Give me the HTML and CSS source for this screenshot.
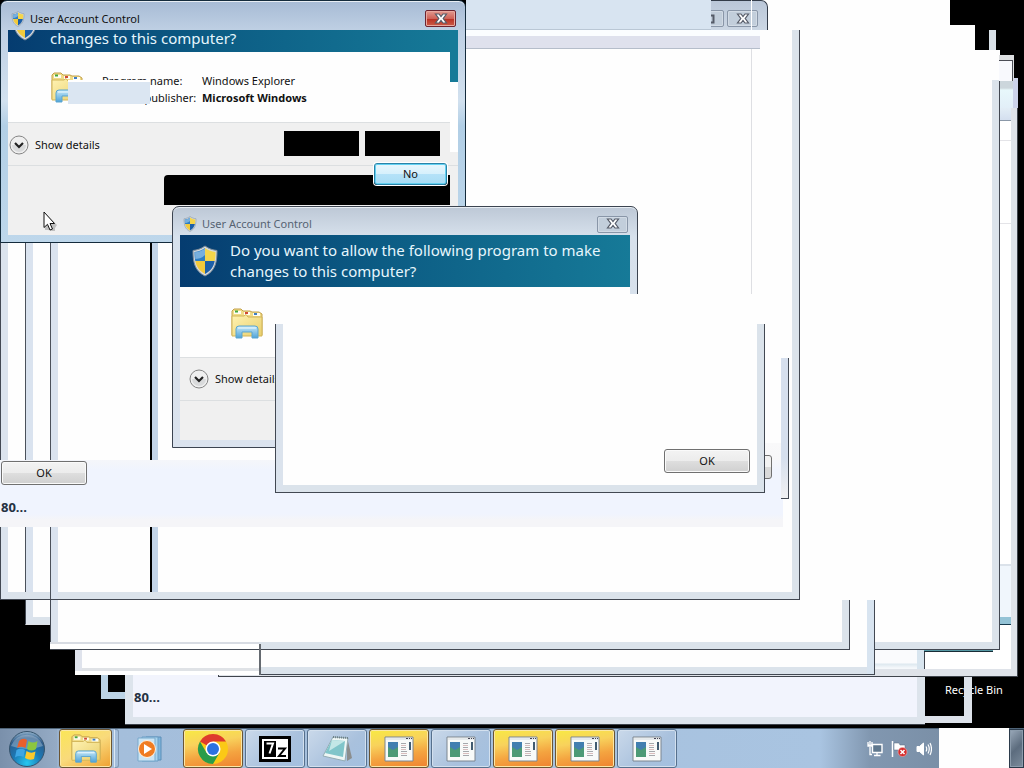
FILE: index.html
```html
<!DOCTYPE html>
<html lang="en">
<head>
<meta charset="utf-8">
<title>Desktop</title>
<link rel="stylesheet" href="styles.css">
</head>
<body>
<svg width="0" height="0" class="defs" aria-hidden="true">
  <defs>
    <linearGradient id="fold" x1="0" y1="0" x2="1" y2="1"><stop offset="0" stop-color="#fff3b4"/><stop offset="1" stop-color="#e9cf6c"/></linearGradient>
    <linearGradient id="glass" x1="0" y1="0" x2="0" y2="1"><stop offset="0" stop-color="#c5e8f8"/><stop offset="1" stop-color="#4fa3d8"/></linearGradient>
    <radialGradient id="orb" cx=".5" cy=".9" r=".9"><stop offset="0" stop-color="#25c8f0"/><stop offset=".45" stop-color="#1c78b4"/><stop offset=".8" stop-color="#2c5c8c"/><stop offset="1" stop-color="#9ab8d0"/></radialGradient>
    <symbol id="shield" viewBox="0 0 26 32">
      <path d="M13 1C9 4 5 5 1 5.500C1 18 3 26 13 31C23 26 25 18 25 5.500C21 5 17 4 13 1Z" fill="#d5dade" stroke="#7e8d9b" stroke-width="1"/>
      <path d="M13 3C10 5.500 6 6.500 2.500 7C2.500 11 2.700 13 3.300 16H13Z" fill="#2d7ec4"/>
      <path d="M13 3C16 5.500 20 6.500 23.500 7C23.500 11 23.300 13 22.700 16H13Z" fill="#f5d54a"/>
      <path d="M3.300 16H13V29C7.500 26 4.500 22 3.300 16Z" fill="#f2ca3c"/>
      <path d="M22.700 16H13V29C18.500 26 21.500 22 22.700 16Z" fill="#1c5fa8"/>
      <path d="M3 7.300C6 7 10 6 13 3.500V10C10 13 6 14 3.300 14Z" fill="#a8d0ee" opacity=".6"/>
    </symbol>
    <symbol id="explorer" viewBox="0 0 34 32">
      <path d="M2 27V3L4 1H11L13 3H20L22 4H29L32 6V27Z" fill="#f1dc88" stroke="#c3a14a"/>
      <path d="M4 3H11V6H4ZM14 4H20V7H14ZM23 5H30V8H23Z" fill="#fffdf2"/>
      <path d="M5 2.500H8V4.500H5Z" fill="#42a63f"/><path d="M15 4H18V6H15Z" fill="#d04a34"/><path d="M24 5H27V7H24Z" fill="#3d7dc4"/>
      <path d="M2 8H14L16 6.500L18 9H32V28H2Z" fill="url(#fold)" stroke="#d2b559"/>
      <path d="M6 30V21Q6 18 9 18H25Q28 18 28 21V30H22V24H12V30Z" fill="url(#glass)" stroke="#5ba5cf"/>
      <path d="M8 20H26" stroke="#eefaff"/>
    </symbol>
    <symbol id="cross" viewBox="0 0 14 12">
      <path d="M1.500 1H5L7 3.500L9 1H12.500L9.200 5.500L12.500 10H9L7 7.500L5 10H1.500L4.800 5.500Z" fill="#fff" stroke="#555b68" stroke-width="1.200"/>
    </symbol>
    <symbol id="chevron" viewBox="0 0 20 20">
      <circle cx="10" cy="10" r="9" fill="#efefef" stroke="#858585"/>
      <path d="M3 10A7 7 0 0 0 17 10Z" fill="#d9dadb"/>
      <path d="M6 8L10 12L14 8" fill="none" stroke="#222" stroke-width="2.200"/>
    </symbol>
    <symbol id="app" viewBox="0 0 30 26">
      <path d="M1 1H29V25H1Z" fill="#f8faf9" stroke="#7c8690"/>
      <path d="M2 2H28V4H2Z" fill="#e6eaec"/><path d="M22 2.500H24M25 2.500H26M27 2.500H28" stroke="#445"/>
      <path d="M4 6H14V21H4Z" fill="#4c9a76"/><path d="M4 6H14V11L9 14L4 11Z" fill="#427fb0"/>
      <path d="M17 7.500H22M17 11.500H22M17 15.500H23M17 19.500H23" stroke="#a5a8ac"/><path d="M17 9.500H22M17 13.500H22M17 17.500H23" stroke="#d9bdbd"/>
      <path d="M25 6H27V14H25Z" fill="#415b70"/>
    </symbol>
  </defs>
</svg>

<main class="desktop">
  <span class="desktop-label">Recycle Bin</span>

  <div class="pane sliver-top"></div>
  <div class="pane trail-white step-1"></div>
  <div class="pane trail-white step-2"></div>
  <div class="pane trail-white step-3"></div>

  <div class="pane corner-right"></div>
  <div class="pane corner-left"></div>
  <section class="pane lower-window"><strong>80...</strong></section>
  <div class="pane far-window">
    <div class="far-side">
      <i class="far-head"></i><i class="far-tool"></i><i class="far-row"></i><i class="far-row tall"></i><i class="far-gap"></i><i class="far-foot"></i>
    </div>
  </div>
  <div class="pane far-box"></div>
  <div class="pane far-cap"></div>
  <div class="pane mid-strip"></div>
  <div class="pane teal-line"></div>
  <div class="pane frame big-right"></div>
  <div class="pane frame w-25"></div>
  <div class="pane left-tail"></div>
  <div class="pane frame w-260"></div>
  <div class="pane frame w-50"></div>
  <div class="pane w-50-foot"></div>
  <div class="pane tick"></div>
  <div class="pane frame w-0"></div>
  <div class="pane edge e-25"></div>
  <div class="pane edge e-50"></div>
  <div class="pane edge e-151"></div>

  <div class="pane back-title">
    <button class="cap" aria-label="Maximize"><svg width="12" height="10" viewBox="0 0 12 10"><path d="M1.500 1.500H10.500V8.500H1.500Z" fill="none" stroke="#555b68" stroke-width="2"/></svg></button>
    <button class="cap" aria-label="Close"><svg width="14" height="12"><use href="#cross"/></svg></button>
  </div>
  <div class="pane back-head"></div>
  <div class="pane back-bar"></div>
  <div class="pane hairline"></div>

  <div class="pane smear-right"></div>
  <section class="pane smear">
    <button class="btn">OK</button>
    <strong>80...</strong>
  </section>
  <div class="pane hook"></div>
  <div class="pane btn-end"></div>

  <section class="pane uac uac-back">
    <header class="title"><svg width="14" height="16"><use href="#shield"/></svg><span>User Account Control</span>
      <button class="cap" aria-label="Close"><svg width="14" height="12"><use href="#cross"/></svg></button></header>
    <div class="client">
      <div class="banner"><svg width="26" height="32"><use href="#shield"/></svg><h2>Do you want to allow the following program to make<br>changes to this computer?</h2></div>
      <div class="info"><svg width="34" height="32"><use href="#explorer"/></svg></div>
      <div class="details"><button class="more"><svg width="20" height="20"><use href="#chevron"/></svg>Show details</button></div>
      <div class="rest"></div>
    </div>
  </section>
  <div class="pane veil"></div>
  <section class="pane frame msg"><button class="btn">OK</button></section>

  <section class="pane uac uac-front">
    <header class="title"><svg width="14" height="16"><use href="#shield"/></svg><span>User Account Control</span>
      <button class="cap red" aria-label="Close"><svg width="14" height="12"><use href="#cross"/></svg></button></header>
    <div class="client">
      <div class="banner"><svg width="26" height="32"><use href="#shield"/></svg><h2>changes to this computer?</h2></div>
      <div class="info"><svg width="34" height="32"><use href="#explorer"/></svg>
        <dl><dt>Program name:</dt><dd>Windows Explorer</dd><dt>Verified publisher:</dt><dd><b>Microsoft Windows</b></dd></dl>
      </div>
      <div class="details"><button class="more"><svg width="20" height="20"><use href="#chevron"/></svg>Show details</button>
        <span class="void"></span><span class="void"></span></div>
      <div class="rest"></div>
    </div>
    <i class="patch"></i><i class="side-blue"></i><i class="side-white"></i><i class="void-wide"></i>
    <button class="btn no">No</button>
  </section>

  <svg class="cursor" width="14" height="21" viewBox="0 0 14 21"><path d="M2 2V19H5L9 20H12V17L14 14Z" fill="#000" opacity=".2"/><path d="M1 1V16.500L4.500 13.300L7 19L9.500 18L7 12.500H11.500Z" fill="#fff" stroke="#111"/></svg>
</main>

<nav class="taskbar" aria-label="Taskbar">
  <button class="start" aria-label="Start"><svg width="38" height="38" viewBox="0 0 38 38"><circle cx="19" cy="19" r="17.500" fill="url(#orb)" stroke="#35536c"/><path d="M3 16A17 17 0 0 1 35 16Q19 22 3 16Z" fill="#fff" opacity=".28"/><path d="M11 11Q15 7 19 10L17.500 18Q13 15.500 9 18Z" fill="#e8602c"/><path d="M20.500 11Q25 14 29.500 11L28 19Q23.500 22 19 19Z" fill="#8cc63f"/><path d="M8.500 20Q13 17.500 17 20L15.500 27Q11 25 7 27.500Z" fill="#3ea6e4"/><path d="M18.500 21Q23 24 27.500 21.500L26 29Q21.500 31 17 28Z" fill="#fcc92c"/></svg></button>
  <button class="task hot narrow" aria-label="Windows Explorer"><svg width="34" height="30"><use href="#explorer"/></svg></button>
  <i class="stack"></i>
  <button class="task flat" aria-label="Media Player"><svg width="30" height="28" viewBox="0 0 30 28"><path d="M10 2H25V25H10Z" fill="#7fb5dc" stroke="#5d8fb8"/><path d="M6 2H22V26H6Z" fill="#a8d4ee" stroke="#6a9dc4"/><path d="M2 3H19V26H2Z" fill="#cbe5f5" stroke="#79a9cc"/><circle cx="11" cy="14" r="8.500" fill="#f07c22" stroke="#fff1e0"/><path d="M8 9L16 14L8 19Z" fill="#fff"/></svg></button>
  <button class="task hot" aria-label="Chrome"><svg width="32" height="32" viewBox="0 0 32 32"><circle cx="16" cy="16" r="15" fill="#fbc916"/><path d="M16 16L3 8.500A15 15 0 0 1 29 8.500H16Z" fill="#de3b2e"/><path d="M3 8.500A15 15 0 0 0 16 31L22.500 19.700L9.500 19.700Z" fill="#2a9c4a"/><circle cx="16" cy="16" r="7.500" fill="#fff"/><circle cx="16" cy="16" r="6" fill="#2c72e0"/></svg></button>
  <button class="task" aria-label="7-Zip"><svg width="32" height="26" viewBox="0 0 32 26"><path d="M1.500 1.500H30.500V24.500H1.500Z" fill="#fff" stroke="#000" stroke-width="3"/><path d="M5 5H17V21H5Z"/><path d="M7.500 7.500H14L10.500 17.500" fill="none" stroke="#fff" stroke-width="2"/><path d="M19 12.500H26L20 20H27" fill="none" stroke="#000" stroke-width="2"/></svg></button>
  <button class="task" aria-label="Notepad"><svg width="32" height="30" viewBox="0 0 32 30"><path d="M26 3L31 24L26 27Z" fill="#8b8d8d"/><path d="M12 3L27 4L24 27L2 22Z" fill="#eef6f5" stroke="#93acb4"/><path d="M11 6L24 7L22 23L4 19Z" fill="#80c5ca"/><path d="M11 6L24 7L8 17Z" fill="#c3e7e7"/><path d="M12 3L27 4" stroke="#6f8088" stroke-width="2" stroke-dasharray="1 1"/></svg></button>
  <button class="task hot" aria-label="Application 1"><svg width="30" height="26"><use href="#app"/></svg></button>
  <button class="task" aria-label="Application 2"><svg width="30" height="26"><use href="#app"/></svg></button>
  <button class="task hot" aria-label="Application 3"><svg width="30" height="26"><use href="#app"/></svg></button>
  <button class="task hot" aria-label="Application 4"><svg width="30" height="26"><use href="#app"/></svg></button>
  <button class="task" aria-label="Application 5"><svg width="30" height="26"><use href="#app"/></svg></button>
  <div class="tray">
    <svg width="16" height="16" viewBox="0 0 16 16" fill="none" stroke="#fff"><path d="M5.500 3.500H15V11.500H5.500Z" fill="#60788e" stroke-width="1.400"/><path d="M10 12V14.500M7 14.500H13.500M3 6V13.500H5M1 1V5H5V1M3 0V3M1 4H5" stroke-width="1.300"/></svg>
    <svg width="17" height="16" viewBox="0 0 17 16"><path d="M1.500 0V16" stroke="#fff" stroke-width="1.500"/><path d="M3 2H8L9 4H14V10H8L7 9H3Z" fill="#fff" stroke="#596b7c" stroke-width=".5"/><circle cx="11.500" cy="11" r="4.500" fill="#d62b2b" stroke="#f2b0b0" stroke-width=".6"/><path d="M9.500 9L13.500 13M13.500 9L9.500 13" stroke="#fff" stroke-width="1.500"/></svg>
    <svg width="16" height="16" viewBox="0 0 16 16" fill="none" stroke="#fff"><path d="M1 5.500H3.500L7.500 2V14L3.500 10.500H1Z" fill="#fff"/><path d="M10 5.500Q11.500 8 10 10.500M12 3.500Q14.500 8 12 12.500M14 2Q17 8 14 14" stroke-width="1.200"/></svg>
  </div>
  <div class="blank"></div>
  <button class="peek" aria-label="Show desktop"></button>
</nav>
</body>
</html>
```
FILE: styles.css
```css
* { box-sizing: border-box; }
body {
  margin: 0;
  min-height: 100vh;
  display: grid;
  grid-template-rows: 1fr 40px;
  background: #000;
  color: #111;
  font: 11px/16px "Noto Sans", "Open Sans", sans-serif;
  overflow: hidden;
}
button { font: inherit; color: inherit; padding: 0; margin: 0; }
svg { display: block; flex: none; }
.defs { position: absolute; }

.desktop { position: relative; overflow: hidden; }
.pane, .cursor { position: absolute; }
.desktop-label { position: absolute; left: 945px; top: 682px; color: #fff; white-space: nowrap; }
strong { font: bold 13px/18px "Open Sans", "Noto Sans", sans-serif; color: #253142; }

/* Desktop trail of windows */
.trail-white { background: #fefefe; left: 466px; }
.step-1 { top: 0; width: 484px; height: 60px; }
.step-2 { top: 25px; width: 509px; height: 60px; }
.step-3 { top: 50px; width: 534px; height: 60px; }
.sliver-top { left: 989px; top: 30px; width: 7px; height: 40px; background: #d9e1e8; }
.corner-right { left: 924px; top: 670px; width: 48px; height: 53px; border: solid #dde2ea; border-width: 0 8px 7px 0; }
.corner-left { left: 101px; top: 660px; width: 30px; height: 39px; border: solid #bcd3e5; border-width: 0 0 7px 7px; }
.lower-window {
  left: 125px; top: 660px; width: 800px; height: 64px;
  border: solid #dde4ec; border-width: 0 8px 7px 8px;
  box-shadow: 0 1px 0 #3d434b;
  background: #f2f4fd; padding: 28px 1px 0;
}
.far-window {
  left: 218px; top: 100px; width: 800px; height: 577px;
  border: solid #dfe3e9; border-width: 0 7px 8px 0;
  background: #fff;
  outline: 1px solid #3f444c; outline-offset: -1px;
  display: flex; justify-content: flex-end;
}
.far-side { width: 11px; display: flex; flex-direction: column; }
.far-head { height: 21px; background: linear-gradient(#ecf7fb, #d4dfef); border-bottom: 1px solid #8b98a8; }
.far-tool { height: 19px; }
.far-row { height: 83px; border-top: 1px solid #e4e4e8; }
.far-row.tall { flex: 1; }
.far-gap { height: 53px; background: #f0f6fc; border-top: 2px solid #dbe2ea; }
.far-foot { height: 52px; border-top: 7px solid #94c3d6; box-shadow: inset 0 1px 0 #16394c; }
.far-cap { left: 999px; top: 78px; width: 19px; height: 30px; border-right: 5px solid #ccd3ea; background: linear-gradient(#ccd6dc 10px, #e8f8fb 12px, #e2eff8); }
.far-box { left: 999px; top: 55px; width: 15px; height: 26px; border: solid #dddfe1; border-width: 5px 1px 0 0; background: #f8f9fd; box-shadow: inset -1px 1px 0 #4b4d55; z-index: 1; }
.mid-strip { left: 874px; top: 650px; width: 51px; height: 19px; border-right: 1px solid #3f444c; background: linear-gradient(#fafbfd 13px, #dde8ef 14px, #f5f8fb 18px); box-shadow: inset -7px 0 0 #d8e5ef; }
.teal-line { left: 924px; top: 649px; width: 69px; height: 3px; background: #5599a5; border-bottom: 1px solid #182d37; }

.frame { background: #fefefe; border: solid #424852; border-width: 0 1px 1px 1px; box-shadow: inset 7px 0 0 #dbe3ed, inset -7px 0 0 #dbe3eb, inset 0 -7px 0 #dbe3eb; }
.big-right { left: 600px; top: 80px; width: 400px; height: 570px; }
.w-25 { left: 25px; top: 243px; width: 300px; height: 382px; border-bottom-color: #dfe2e7; }
.w-50 { left: 50px; top: 600px; width: 800px; height: 50px; }
.w-50-foot { left: 50px; top: 642px; width: 209px; height: 8px; background: #fff; border-top: 2px solid #d8dce3; border-bottom: 1px solid #424852; }
.w-260 { left: 259px; top: 600px; width: 616px; height: 75px; box-shadow: inset -7px 0 0 #d8e4f0, inset 0 -7px 0 #dbe3eb; }
.left-tail { left: 75px; top: 649px; width: 184px; height: 26px; background: #fefefe; border-bottom: 4px solid #fff; box-shadow: inset 7px 0 0 #dfe3ec, inset 0 -3px 0 #dfe2e6; }
.tick { left: 259px; top: 644px; width: 2px; height: 31px; background: #656a70; }
.w-0 { left: 0; top: 30px; width: 800px; height: 570px; }
.edge { top: 243px; height: 349px; border-left: 1px solid #4b515b; background: #dae3ef; width: 8px; }
.e-25 { left: 25px; }
.e-50 { left: 50px; height: 356px; }
.e-151 { left: 150px; border-left: 2px solid #000; background: #c3d4e7; }

.back-head { left: 466px; top: 0; width: 245px; height: 30px; background: #d8e4f1; border-bottom: 1px solid #bac7d5; }
.back-title {
  left: 690px; top: 0; width: 78px; height: 30px;
  display: flex; justify-content: flex-end; gap: 3px; padding: 9px 9px 0 0;
  background: linear-gradient(#bac7d8, #ccd7e4);
  border: solid #333c49; border-width: 1px 1px 0 0; border-radius: 0 7px 0 0;
}
.back-bar { left: 466px; top: 30px; width: 294px; height: 19px; background: #dfe1ed; border-top: 6px solid #fbfdff; border-bottom: 1px solid #b5bdca; }
.hairline { left: 751px; top: 0; width: 1px; height: 324px; background: linear-gradient(#fff 30px, transparent 30px 49px, #dedfe3 49px); }
.hook { left: 781px; top: 358px; width: 8px; height: 141px; background: linear-gradient(#d6dfed 100px, #f0f0f2 140px); border-right: 1px solid #424852; border-bottom: 1px solid #424852; }
.smear { left: 0; top: 460px; width: 783px; height: 67px; background: linear-gradient(#f5f6fa, #f0f4fe 10px 54px, #f5f5f8 60px); display: flex; flex-direction: column; align-items: flex-start; gap: 13px; padding: 1px; }
.smear-right { left: 765px; top: 443px; width: 18px; height: 55px; background: linear-gradient(#f9f9fa, #f4f4f6); }
.btn-end { left: 755px; top: 455px; width: 17px; height: 24px; border: 1px solid #707070; border-radius: 3px; background: linear-gradient(#f2f2f2 50%, #d9d9d9 50%); }

/* Controls */
.btn { width: 86px; height: 24px; border: 1px solid #707070; border-radius: 3px; background: linear-gradient(#f3f3f3, #ececec 50%, #dedede 51%, #d0d0d0); box-shadow: inset 0 0 0 1px #fafafa; }
.cap { width: 31px; height: 17px; border: 1px solid #8996a8; border-radius: 2px; background: #c2cedb; display: grid; place-items: center; box-shadow: inset 0 0 0 1px #d2dbe5; }
.cap.red { border-color: #6c2430; background: linear-gradient(#e39a90, #cf6258 50%, #b82e22 51%, #cc5c48); box-shadow: inset 0 0 0 1px #e8a89f; }

/* User Account Control dialogs */
.uac { display: flex; flex-direction: column; width: 466px; border: 1px solid #3c4450; border-radius: 7px 7px 0 0; padding: 0 7px 7px; background: linear-gradient(#bdc8d6, #d7e1ec 30px, #dbe3ee); box-shadow: inset 0 1px 0 #e8eef4; }
.uac-back { left: 172px; top: 206px; height: 242px; color: #566372; z-index: 2; }
.uac-front { left: 0; top: 0; height: 243px; background: linear-gradient(#a7bbd5, #bfd0e4 30px, #d2e1ef 100px, #b2cfe6 125px, #bed7eb); border-color: #142b3c; }
.title { display: flex; align-items: center; height: 28px; flex: none; padding: 6px 2px 0 3px; gap: 5px; }
.title .cap { margin-left: auto; }
.client { flex: 1; display: flex; flex-direction: column; overflow: hidden; background: #f0f0f0; color: #111; }
.banner { display: flex; flex: none; gap: 12px; align-items: center; height: 52px; padding: 0 12px; background: linear-gradient(90deg, #053c70, #0c5c84 45%, #167a98); color: #e6f6fd; }
.banner h2 { margin: 0; font: 15px/21px "Noto Sans", "Open Sans", sans-serif; white-space: nowrap; }
.info { display: flex; flex: none; height: 70px; padding: 21px 50px; background: #fefefe; }
.details { display: flex; flex: none; align-items: center; height: 44px; padding: 0 9px; border: solid #dcdfe1; border-width: 1px 0; }
.rest { flex: 1; }
.more { display: flex; align-items: center; gap: 6px; border: 0; background: none; white-space: nowrap; }
.uac-front .title { height: 29px; }
.uac-front .banner { height: 22px; align-items: flex-end; padding: 0 4px; }
.uac-front .banner svg { margin-bottom: 11px; }
.uac-front .banner h2 { line-height: 16px; padding-bottom: 6px; }
.uac-front .info { padding: 20px 42px; gap: 18px; }
.uac-front .details { padding: 0 18px 2px 1px; gap: 6px; }
.uac-front .more { margin-right: auto; padding-top: 4px; }
.void { width: 75px; height: 25px; background: #000; }
dl { margin: 0; display: grid; grid-template-columns: 95px 1fr; column-gap: 5px; line-height: 17px; align-content: start; white-space: nowrap; }
dd { margin: 0; }
.patch { position: absolute; left: 67px; top: 79px; width: 82px; height: 24px; background: #dbe6f2; border-top: 2px solid #fff; }
.side-blue, .side-white { position: absolute; left: 449px; width: 8px; }
.side-blue { top: 29px; height: 52px; background: #167a98; }
.side-white { top: 81px; height: 70px; background: #fff; }
.void-wide { position: absolute; left: 163px; top: 174px; width: 286px; height: 30px; background: #000; border-top-left-radius: 4px; }
.no { position: absolute; left: 373px; top: 162px; width: 73px; height: 22px; border-color: #2b83a8; background: linear-gradient(#e8f6fc, #d6f0fc 50%, #b5e2f8 51%, #a8dcf5); box-shadow: inset 0 0 0 1px #62d1f2, 0 0 0 1px #fff; }
.veil { z-index: 3; left: 276px; top: 294px; width: 489px; height: 60px; background: #fefefe; }
.msg { z-index: 4; left: 275px; top: 324px; width: 490px; height: 169px; display: flex; justify-content: flex-end; align-items: flex-end; padding: 0 14px 19px; }
.cursor { left: 43px; top: 211px; }

/* Taskbar */
.taskbar { display: flex; gap: 2px; background: linear-gradient(90deg, #8fa6c2, #a4bedb 120px, #a9c4e1 820px, #8197b0 870px, #72869c); border-top: 1px solid #4f6478; }
.taskbar button { display: grid; place-items: center; }
.start { width: 57px; border: 0; padding-right: 3px; background: linear-gradient(90deg, #7a90ab, #95abc5); }
.task { width: 60px; border: 1px solid #56708d; border-radius: 3px; background: linear-gradient(135deg, #cad9ea, #a9c1dd 60%, #a3c0e0); box-shadow: inset 0 0 0 1px #d3e0ee; }
.taskbar .hot { background: linear-gradient(170deg, #f8ea42, #f8d25c 35%, #f4a440 65%, #ef8230); border-color: #6b5533; box-shadow: inset 0 0 0 1px #fbe7a6; }
.taskbar .narrow { width: 53px; background: linear-gradient(150deg, #fae656, #f9da7c 50%, #efa030); }
.task.flat { background: none; border-color: transparent; box-shadow: none; }
.stack { width: 5px; border: 1px solid #7e96b2; border-left-color: #dce8f4; border-radius: 0 3px 3px 0; }
.tray { display: flex; align-items: center; gap: 8px; margin-left: auto; padding: 0 7px 0 0; }
.blank { width: 70px; background: #fefefe; margin: -1px -2px 0; }
.peek { width: 15px; border: 1px solid #2b3a4a; background: linear-gradient(135deg, #9baaba, #5c6c7e 50%, #7c8c9c); box-shadow: inset 0 0 0 1px #8c9cac; }
```
